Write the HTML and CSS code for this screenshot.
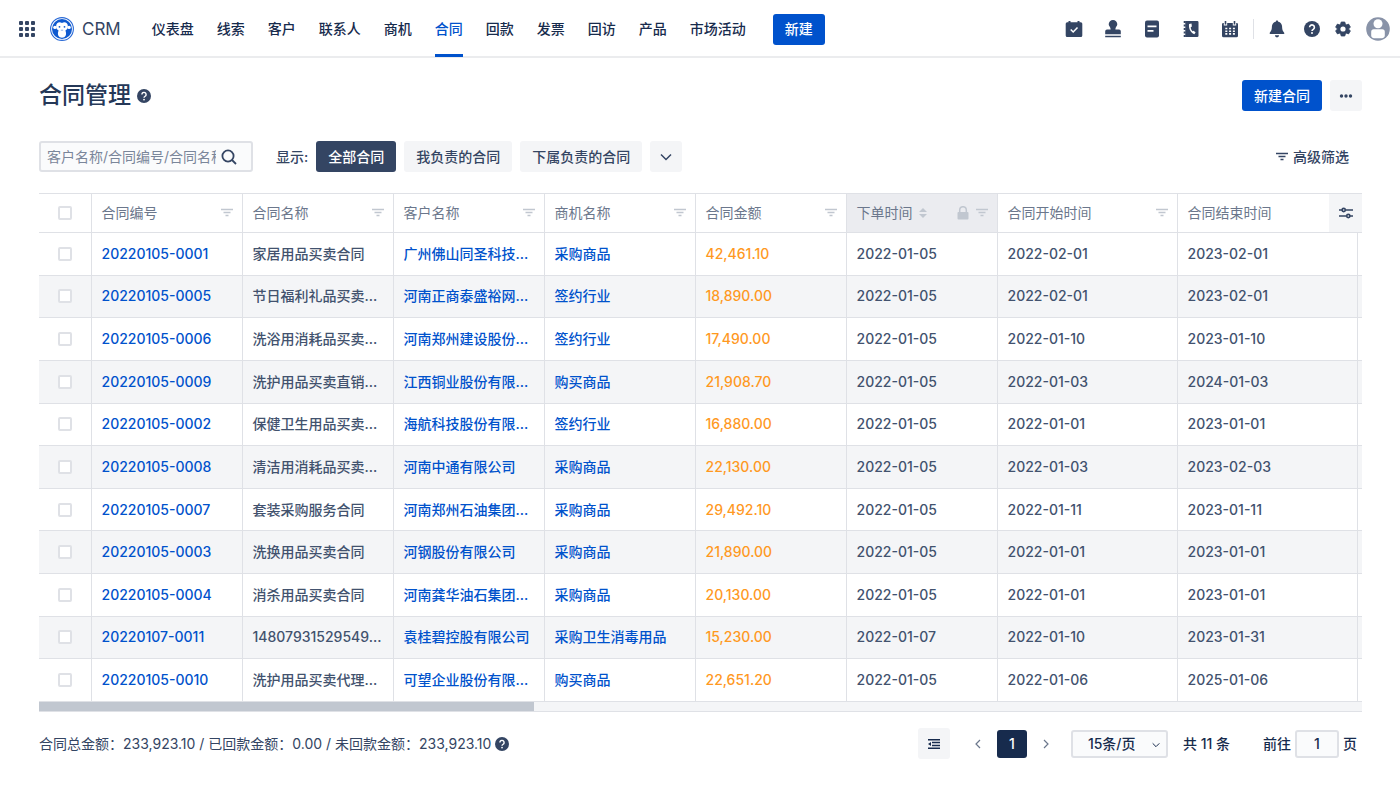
FILE: index.html
```html
<!DOCTYPE html>
<html lang="zh-CN">
<head>
  <meta charset="UTF-8">
  <meta name="viewport" content="width=device-width, initial-scale=1.0">
  <title>合同管理 - CRM</title>
  <link rel="stylesheet" href="styles.css">
</head>
<body>
  <!-- shared icons -->
  <svg class="sprite" aria-hidden="true">
    <symbol id="i-filter" viewBox="0 0 12 12">
      <path d="M0 2.5h12M2.5 5.5h7M4.5 8.5h3" fill="none" stroke="currentColor" stroke-width="1.4"/>
    </symbol>
    <symbol id="i-help" viewBox="0 0 16 16">
      <circle cx="8" cy="8" r="8" fill="currentColor"/>
      <path d="M5.6 6.3a2.4 2.4 0 1 1 3.7 2c-.8.5-1.3.8-1.3 1.7" fill="none" stroke="#fff" stroke-width="1.6"/>
      <circle cx="8" cy="12.1" r="1" fill="#fff"/>
    </symbol>
    <symbol id="i-down" viewBox="0 0 12 12">
      <path d="M1 3.5l5 5 5-5" fill="none" stroke="currentColor" stroke-width="1.5"/>
    </symbol>
  </svg>

  <header class="topbar">
    <button class="icon-btn apps" aria-label="应用">
      <svg width="16" height="16" viewBox="0 0 16 16" fill="currentColor">
        <rect x="0" y="0" width="4" height="4" rx="1"/><rect x="6" y="0" width="4" height="4" rx="1"/><rect x="12" y="0" width="4" height="4" rx="1"/>
        <rect x="0" y="6" width="4" height="4" rx="1"/><rect x="6" y="6" width="4" height="4" rx="1"/><rect x="12" y="6" width="4" height="4" rx="1"/>
        <rect x="0" y="12" width="4" height="4" rx="1"/><rect x="6" y="12" width="4" height="4" rx="1"/><rect x="12" y="12" width="4" height="4" rx="1"/>
      </svg>
    </button>
    <a class="brand" href="#">
      <svg width="24" height="24" viewBox="0 0 24 24">
        <circle cx="12" cy="12" r="11.4" fill="#fff" stroke="#2a6ad6" stroke-width="1.1"/>
        <circle cx="12" cy="12" r="10" fill="#0f5ad0"/>
        <circle cx="4.9" cy="10.4" r="1.7" fill="#fff"/>
        <circle cx="19.1" cy="10.4" r="1.7" fill="#fff"/>
        <path d="M12 6C9.400 4.200 6.100 5.700 6.100 9.200c0 2.200 1 3.500 2.500 4.200C8 15 7.600 16.800 8.300 18.600c1.300 3 6.100 3 7.400 0 .7-1.800.3-3.600-.3-5.200 1.500-.7 2.500-2 2.500-4.200C17.900 5.700 14.600 4.200 12 6z" fill="#fff"/>
        <circle cx="9.5" cy="9.8" r=".9" fill="#0f5ad0"/>
        <circle cx="14.5" cy="9.8" r=".9" fill="#0f5ad0"/>
        <path d="M10.900 13.200h.7M12.400 13.200h.7" stroke="#0f5ad0" stroke-width=".8"/>
      </svg>
      <span>CRM</span>
    </a>
    <nav class="nav">
      <a href="#">仪表盘</a>
      <a href="#">线索</a>
      <a href="#">客户</a>
      <a href="#">联系人</a>
      <a href="#">商机</a>
      <a href="#" class="active">合同</a>
      <a href="#">回款</a>
      <a href="#">发票</a>
      <a href="#">回访</a>
      <a href="#">产品</a>
      <a href="#">市场活动</a>
    </nav>
    <button class="btn primary">新建</button>
    <div class="tools">
      <div class="tool-group wide">
        <button class="icon-btn" aria-label="待办">
          <svg width="18" height="18" viewBox="0 0 18 18"><path d="M3.500 1h2v1.300h7V1h2v1.300h1.300A1.500 1.500 0 0 1 17.300 3.800v11.700a1.500 1.500 0 0 1-1.500 1.500H2.200A1.500 1.500 0 0 1 .7 15.500V3.800A1.500 1.500 0 0 1 2.200 2.300h1.300z" fill="currentColor"/><path d="M5.700 9.500l2.500 2.500 4.300-4.400" fill="none" stroke="#fff" stroke-width="1.500"/></svg>
        </button>
        <button class="icon-btn" aria-label="审批">
          <svg width="18" height="18" viewBox="0 0 18 18" fill="currentColor"><path d="M9 0a4.300 4.300 0 0 1 4.300 4.300c0 2-1.900 2.700-1.900 4.700v.5H15a1.800 1.800 0 0 1 1.800 1.800V14.300H1.200v-3A1.800 1.800 0 0 1 3 9.500h3.600V9c0-2-1.900-2.700-1.900-4.700A4.300 4.300 0 0 1 9 0zM1.200 15.800h15.600V17.200H1.200z"/></svg>
        </button>
        <button class="icon-btn" aria-label="日志">
          <svg width="18" height="18" viewBox="0 0 18 18"><rect x="2" y=".5" width="14" height="17" rx="2" fill="currentColor"/><path d="M4.500 6.400h9M4.500 10.900h6" stroke="#fff" stroke-width="1.900"/></svg>
        </button>
        <button class="icon-btn" aria-label="通讯录">
          <svg width="18" height="18" viewBox="0 0 18 18"><path d="M3.300 1h12A1.300 1.300 0 0 1 16.500 2.300v13.400a1.300 1.300 0 0 1-1.300 1.300H3.300z" fill="currentColor"/><path d="M1.700 2h2M1.700 5.500h2M1.700 9h2M1.700 12.500h2M1.700 16h2" stroke="currentColor" stroke-width="2"/><path d="M7.100 4c-.8 4 1.200 8.700 5.200 10.200l1.300-1.700-1.900-1.800-1.200.6c-1.100-1.100-1.700-2.500-1.800-4l1.200-.7L9.500 3.600z" fill="#fff"/></svg>
        </button>
        <button class="icon-btn" aria-label="日程">
          <svg width="18" height="18" viewBox="0 0 18 18"><path d="M2.300 3h13.400A1.300 1.300 0 0 1 17 4.300v11.400a1.500 1.500 0 0 1-1.500 1.500h-13A1.500 1.500 0 0 1 1 15.700V4.300A1.300 1.300 0 0 1 2.300 3z" fill="currentColor"/><path d="M4.500 1v4.500M13.500 1v4.500" stroke="#fff" stroke-width="3.400"/><path d="M4.500 1v3.500M13.500 1v3.500" stroke="currentColor" stroke-width="1.600"/><path d="M4.300 8.500h9.600M4.300 11.200h9.600M4.300 13.900h9.600" stroke="#fff" stroke-width="1.600" stroke-dasharray="2 1.800"/></svg>
        </button>
      </div>
      <div class="divider"></div>
      <div class="tool-group">
        <button class="icon-btn bell" aria-label="通知">
          <svg width="16" height="18" viewBox="0 0 16 18" fill="currentColor"><path d="M8 .5c.8 0 1.200.5 1.200 1.200 2.400.5 3.900 2.400 3.900 4.900 0 4.500 1.600 5.400 2.200 6.300.3.600 0 1.200-.7 1.200H1.400c-.7 0-1-.6-.7-1.200.6-.9 2.200-1.800 2.200-6.300 0-2.500 1.500-4.400 3.900-4.900C6.800 1 7.200.5 8 .5zM5.900 15.300h4.200a2.100 2.100 0 0 1-4.200 0z"/></svg>
        </button>
        <button class="icon-btn" aria-label="帮助"><svg width="16" height="16"><use href="#i-help"/></svg></button>
        <button class="icon-btn" aria-label="设置">
          <svg width="16" height="16" viewBox="0 0 16 16"><path d="M6.200 1h3.600l.5 2.100 1.200.7 2.100-.7 1.800 3.100-1.600 1.400v.8l1.600 1.400-1.800 3.100-2.100-.7-1.200.7-.5 2.100H6.200l-.5-2.100-1.200-.7-2.100.7L.6 9.800l1.600-1.400v-.8L.6 6.200l1.800-3.100 2.100.7 1.200-.7z" fill="currentColor" stroke="currentColor" stroke-width=".8" stroke-linejoin="round"/><circle cx="8" cy="8" r="2.600" fill="#fff"/></svg>
        </button>
        <button class="icon-btn avatar" aria-label="我的账户">
          <svg width="24" height="24" viewBox="0 0 24 24"><circle cx="12" cy="12" r="11.800" fill="#8993a8"/><circle cx="12" cy="6.800" r="4.500" fill="#fff"/><path d="M7.700 12.300h8.600a2.500 2.500 0 0 1 2.500 2.500v4c0 1.500-1.500 2.400-2.800 2.400H8c-1.300 0-2.800-.9-2.800-2.400v-4a2.500 2.500 0 0 1 2.500-2.500z" fill="#fff"/></svg>
        </button>
      </div>
    </div>
  </header>

  <main class="page">
    <div class="page-head">
      <h1>合同管理</h1>
      <svg class="help" width="14" height="14"><use href="#i-help"/></svg>
      <div class="page-actions">
        <button class="btn primary">新建合同</button>
        <button class="btn square" aria-label="更多">
          <svg width="14" height="4" viewBox="0 0 14 4" fill="currentColor"><circle cx="2.500" cy="2" r="1.700"/><circle cx="7" cy="2" r="1.700"/><circle cx="11.500" cy="2" r="1.700"/></svg>
        </button>
      </div>
    </div>

    <div class="filters">
      <label class="search">
        <input type="text" aria-label="搜索合同" placeholder="客户名称/合同编号/合同名称">
        <svg width="16" height="16" viewBox="0 0 16 16" fill="none" stroke="currentColor" stroke-width="1.800"><circle cx="7" cy="7" r="5.600"/><path d="M11 11l4 4"/></svg>
      </label>
      <span class="filters-label">显示:</span>
      <div class="tabs">
        <button class="btn dark">全部合同</button>
        <button class="btn">我负责的合同</button>
        <button class="btn">下属负责的合同</button>
        <button class="btn square" aria-label="更多场景"><svg width="12" height="12"><use href="#i-down"/></svg></button>
      </div>
      <button class="advanced"><svg width="12" height="12"><use href="#i-filter"/></svg>高级筛选</button>
    </div>

    <div class="table-wrap">
      <table class="table">
        <colgroup>
          <col class="c-check"><col class="c-base"><col class="c-base"><col class="c-base"><col class="c-base"><col class="c-base"><col class="c-base"><col class="c-date"><col><col class="c-tail">
        </colgroup>
        <thead>
          <tr>
            <th class="check"><input type="checkbox" aria-label="全选"></th>
            <th><div class="th">合同编号<svg width="12" height="12"><use href="#i-filter"/></svg></div></th>
            <th><div class="th">合同名称<svg width="12" height="12"><use href="#i-filter"/></svg></div></th>
            <th><div class="th">客户名称<svg width="12" height="12"><use href="#i-filter"/></svg></div></th>
            <th><div class="th">商机名称<svg width="12" height="12"><use href="#i-filter"/></svg></div></th>
            <th><div class="th">合同金额<svg width="12" height="12"><use href="#i-filter"/></svg></div></th>
            <th class="sorted"><div class="th">下单时间
              <svg class="sort" width="8" height="10" viewBox="0 0 8 10" fill="currentColor"><path d="M0 4l4-4 4 4zM0 6h8l-4 4z"/></svg>
              <svg class="lock" width="12" height="14" viewBox="0 0 12 14"><rect x=".5" y="6" width="11" height="7.500" rx="1" fill="currentColor"/><path d="M2.700 6V4a3.300 3.300 0 0 1 6.600 0v2" fill="none" stroke="currentColor" stroke-width="1.500"/></svg>
              <svg width="12" height="12"><use href="#i-filter"/></svg></div></th>
            <th><div class="th">合同开始时间<svg width="12" height="12"><use href="#i-filter"/></svg></div></th>
            <th class="open" colspan="2"><div class="th">合同结束时间</div></th>
          </tr>
        </thead>
        <tbody id="rows"></tbody>
      </table>
      <button class="columns" aria-label="列设置">
        <svg width="14" height="12" viewBox="0 0 14 12" fill="none" stroke="currentColor" stroke-width="1.600"><path d="M0 3h3M6.500 3H14M0 9h7.500M11 9h3"/><circle cx="4.700" cy="3" r="1.600"/><circle cx="9.300" cy="9" r="1.600"/></svg>
      </button>
      <div class="scrollbar"><div class="thumb"></div></div>
    </div>

    <div class="footer">
      <div class="totals">合同总金额：233,923.10 / 已回款金额：0.00 / 未回款金额：233,923.10<svg width="14" height="14"><use href="#i-help"/></svg></div>
      <div class="pager">
        <button class="btn square" aria-label="行高">
          <svg width="12" height="12" viewBox="0 0 12 12"><path d="M0 1.700h12M4 4.600h8M4 7.400h8M0 10.300h12" stroke="currentColor" stroke-width="1.500"/><path d="M0 6l3-2v4z" fill="currentColor"/></svg>
        </button>
        <button class="arrow" aria-label="上一页"><svg width="6" height="10" viewBox="0 0 6 10"><path d="M5 1L1 5l4 4" fill="none" stroke="currentColor" stroke-width="1.200"/></svg></button>
        <button class="current">1</button>
        <button class="arrow" aria-label="下一页"><svg width="6" height="10" viewBox="0 0 6 10"><path d="M1 1l4 4-4 4" fill="none" stroke="currentColor" stroke-width="1.200"/></svg></button>
        <div class="size">
          <select aria-label="每页条数"><option>15条/页</option></select>
          <svg width="8" height="8"><use href="#i-down"/></svg>
        </div>
        <span class="count">共 11 条</span>
        <label class="goto">前往<input type="text" value="1">页</label>
      </div>
    </div>
  </main>

  <script>
    const contracts = [
      ['20220105-0001', '家居用品买卖合同', '广州佛山同圣科技...', '采购商品', '42,461.10', '2022-01-05', '2022-02-01', '2023-02-01'],
      ['20220105-0005', '节日福利礼品买卖...', '河南正商泰盛裕网...', '签约行业', '18,890.00', '2022-01-05', '2022-02-01', '2023-02-01'],
      ['20220105-0006', '洗浴用消耗品买卖...', '河南郑州建设股份...', '签约行业', '17,490.00', '2022-01-05', '2022-01-10', '2023-01-10'],
      ['20220105-0009', '洗护用品买卖直销...', '江西铜业股份有限...', '购买商品', '21,908.70', '2022-01-05', '2022-01-03', '2024-01-03'],
      ['20220105-0002', '保健卫生用品买卖...', '海航科技股份有限...', '签约行业', '16,880.00', '2022-01-05', '2022-01-01', '2023-01-01'],
      ['20220105-0008', '清洁用消耗品买卖...', '河南中通有限公司', '采购商品', '22,130.00', '2022-01-05', '2022-01-03', '2023-02-03'],
      ['20220105-0007', '套装采购服务合同', '河南郑州石油集团...', '采购商品', '29,492.10', '2022-01-05', '2022-01-11', '2023-01-11'],
      ['20220105-0003', '洗换用品买卖合同', '河钢股份有限公司', '采购商品', '21,890.00', '2022-01-05', '2022-01-01', '2023-01-01'],
      ['20220105-0004', '消杀用品买卖合同', '河南龚华油石集团...', '采购商品', '20,130.00', '2022-01-05', '2022-01-01', '2023-01-01'],
      ['20220107-0011', '14807931529549...', '袁桂碧控股有限公司', '采购卫生消毒用品', '15,230.00', '2022-01-07', '2022-01-10', '2023-01-31'],
      ['20220105-0010', '洗护用品买卖代理...', '可望企业股份有限...', '购买商品', '22,651.20', '2022-01-05', '2022-01-06', '2025-01-06']
    ];
    const linkColumns = [0, 2, 3];
    const rows = document.getElementById('rows');

    contracts.forEach((contract) => {
      const tr = document.createElement('tr');
      tr.innerHTML = `<td class="check"><input type="checkbox" aria-label="选择 ${contract[0]}"></td>`;
      contract.forEach((value, i) => {
        const cell = linkColumns.includes(i) ? `<a href="#">${value}</a>` : value;
        tr.innerHTML += `<td${i === 4 ? ' class="amount"' : ''}>${cell}</td>`;
      });
      tr.innerHTML += '<td class="tail"></td>';
      rows.appendChild(tr);
    });
  </script>
</body>
</html>
```
FILE: styles.css
```css
* {
  box-sizing: border-box;
}
body {
  margin: 0;
  background: #fff;
  color: #344563;
  font-family: Inter, "Noto Sans CJK SC", sans-serif;
  font-size: 14px;
  font-weight: 500;
  line-height: 20px;
}
button, input, select {
  font: inherit;
  color: inherit;
}
button {
  border: 0;
  padding: 0;
  background: none;
  cursor: pointer;
}
a {
  color: #0052cc;
  text-decoration: none;
}
svg {
  display: block;
  flex: none;
}
.sprite {
  position: absolute;
  width: 0;
  height: 0;
}

/* top bar */
.topbar {
  display: flex;
  align-items: center;
  height: 58px;
  padding: 2px 10px 0 19px;
  border-bottom: 2px solid #ebecee;
}
.icon-btn {
  display: flex;
  align-items: center;
}
.brand {
  display: flex;
  align-items: center;
  gap: 8px;
  margin-left: 15px;
  color: #344563;
  font-size: 17px;
  font-weight: 400;
}
.nav {
  display: flex;
  align-self: stretch;
  gap: 23px;
  margin: 0 27px 0 31px;
}
.nav a {
  display: flex;
  align-items: center;
  height: 55px;
  padding-top: 2px;
  border-bottom: 3px solid transparent;
  color: #172b4d;
  white-space: nowrap;
}
.nav a.active {
  color: #0052cc;
  border-color: #0052cc;
}
.btn {
  height: 31px;
  padding: 0 12px;
  border-radius: 3px;
  background: #f4f5f7;
  white-space: nowrap;
}
.btn.primary {
  background: #0052cc;
  color: #fff;
}
.btn.dark {
  background: #344563;
  color: #fff;
}
.btn.square {
  display: flex;
  align-items: center;
  justify-content: center;
  width: 32px;
  padding: 0;
}
.tools {
  display: flex;
  align-items: center;
  margin-left: auto;
}
.tool-group {
  display: flex;
  align-items: center;
  gap: 15px;
}
.tool-group.wide {
  gap: 21px;
}
.divider {
  width: 1px;
  height: 20px;
  margin: 0 15px 0 14px;
  background: #dfe1e6;
}
.bell {
  margin-right: 4px;
}

/* page */
.page {
  padding: 22px 38px 20px 39px;
}
.page-head {
  display: flex;
  align-items: center;
}
h1 {
  margin: 0 6px 0 0;
  color: #253858;
  font-size: 23px;
  font-weight: 500;
  line-height: 31px;
}
.page-actions {
  display: flex;
  gap: 8px;
  margin-left: auto;
}
.filters {
  display: flex;
  align-items: center;
  margin: 30px 0 21px;
}
.search {
  display: flex;
  align-items: center;
  gap: 5px;
  width: 214px;
  height: 31px;
  padding: 0 14px 0 6px;
  border: 2px solid #dfe1e6;
  border-radius: 3px;
  background: #fafbfc;
}
.search input {
  flex: 1;
  min-width: 0;
  padding: 0;
  border: 0;
  outline: 0;
  background: none;
}
.search input::placeholder {
  color: #7a869a;
  font-weight: 400;
}
.filters-label {
  margin: 0 8px 0 23px;
}
.tabs {
  display: flex;
  gap: 8px;
}
.advanced {
  display: flex;
  align-items: center;
  gap: 5px;
  margin: 0 13px 0 auto;
}

/* contract table */
.table-wrap {
  position: relative;
}
.table {
  width: 100%;
  height: 509px;
  table-layout: fixed;
  border-collapse: collapse;
  color: #42526e;
}
.c-check {
  width: 52px;
}
.c-base {
  width: 151px;
}
.c-date {
  width: 180px;
}
.c-tail {
  width: 5px;
}
.table th {
  height: 39px;
  padding: 0 9px 0 10px;
  border: 1px solid #dfe1e6;
  color: #6b778c;
  font-weight: 400;
  text-align: left;
}
.table td {
  padding: 0 10px;
  border: 1px solid #dfe1e6;
  white-space: nowrap;
}
.table .check {
  padding: 0;
  border-left: 0;
}
.table .tail {
  padding: 0;
}
.table .tail, .table .open {
  border-right: 0;
}
tbody tr:nth-child(even) {
  background: #f4f5f7;
}
.table .amount {
  color: #ff991f;
}
.th {
  display: flex;
  align-items: center;
}
.th svg {
  margin-left: auto;
  color: #c1c7d0;
}
.th .sort {
  margin-left: 6px;
}
.th .lock + svg {
  margin-left: 7px;
}
.table .sorted {
  background: #ebecf0;
}
input[type="checkbox"] {
  appearance: none;
  display: block;
  width: 14px;
  height: 14px;
  margin: 0 auto;
  border: 2px solid #dfe1e6;
  border-radius: 2px;
  background: #fff;
}
input[type="checkbox"]:checked {
  background: #0052cc;
}
.columns {
  position: absolute;
  top: 1px;
  right: 0;
  display: flex;
  align-items: center;
  justify-content: center;
  width: 33px;
  height: 38px;
  background: #f4f5f7;
}
.scrollbar {
  height: 10px;
  border-bottom: 1px solid #dfe1e6;
  background: #f4f5f7;
}
.thumb {
  width: 37.4%;
  height: 9px;
  background: #c1c7d0;
}

/* totals and pager */
.footer {
  display: flex;
  align-items: center;
  justify-content: space-between;
  margin-top: 16px;
}
.totals {
  display: flex;
  align-items: center;
  gap: 4px;
  font-weight: 400;
}
.pager {
  display: flex;
  align-items: center;
  padding-right: 5px;
  color: #172b4d;
}
.arrow {
  display: flex;
  justify-content: center;
  width: 16px;
  margin: 0 11px 0 20px;
  color: #6b778c;
}
.current {
  width: 30px;
  height: 28px;
  border-radius: 3px;
  background: #172b4d;
  color: #fff;
}
.current + .arrow {
  margin: 0 17px 0 11px;
}
.size {
  position: relative;
}
.size select, .goto input {
  height: 28px;
  border: 2px solid #dfe1e6;
  border-radius: 3px;
  background: #fafbfc;
}
.size select {
  appearance: none;
  width: 97px;
  padding: 0 14px 0 15px;
}
.size svg {
  position: absolute;
  top: 11px;
  right: 8px;
  pointer-events: none;
}
.count {
  margin: 0 33px 0 15px;
}
.goto {
  display: flex;
  align-items: center;
  gap: 4px;
}
.goto input {
  width: 44px;
  padding: 0;
  text-align: center;
}
```
